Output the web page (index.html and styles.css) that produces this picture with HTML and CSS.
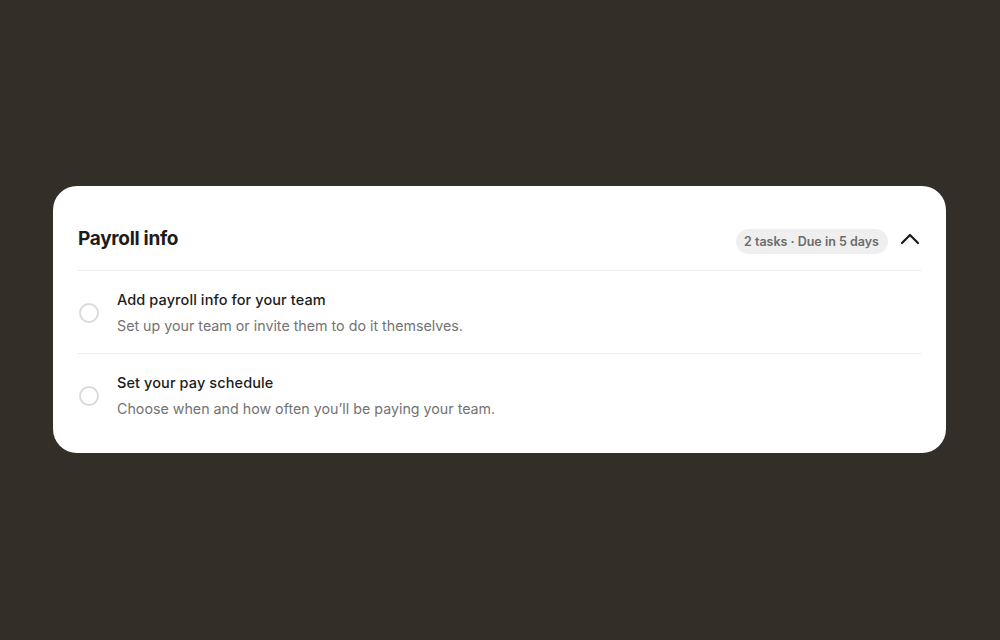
FILE: index.html
```html
<!DOCTYPE html>
<html>
<head>
<meta charset="utf-8">
<link rel="stylesheet" href="styles.css">
</head>
<body>
<div class="stage">
  <section class="card">
    <header class="card-header">
      <h2 class="card-title">Payroll info</h2>
      <div class="header-right">
        <span class="badge">2 tasks · Due in 5 days</span>
        <svg class="chevron" width="24" height="24" viewBox="0 0 24 24" fill="none" stroke="#1a1a1a" stroke-width="2.2" stroke-linecap="round" stroke-linejoin="round"><path d="M4 16 L12 8 L20 16"/></svg>
      </div>
    </header>
    <div class="task">
      <span class="check"></span>
      <div class="task-text">
        <div class="task-title">Add payroll info for your team</div>
        <div class="task-desc">Set up your team or invite them to do it themselves.</div>
      </div>
    </div>
    <div class="task">
      <span class="check"></span>
      <div class="task-text">
        <div class="task-title">Set your pay schedule</div>
        <div class="task-desc">Choose when and how often you’ll be paying your team.</div>
      </div>
    </div>
  </section>
</div>
</body>
</html>
```
FILE: styles.css
```css
* { box-sizing: border-box; }
html, body {
  margin: 0;
  padding: 0;
  background: #342e28;
  font-family: Inter, "Noto Sans", "Liberation Sans", sans-serif;
}
.stage {
  width: 1000px;
  height: 640px;
  padding: 186px 54px 0 53px;
}
.card {
  background: #ffffff;
  border-radius: 24px;
  height: 267px;
  padding: 24px 25px 17px 25px;
}
.card-header {
  display: flex;
  align-items: center;
  justify-content: space-between;
  padding: 13px 0 16px 0;
  border-bottom: 1px solid #ececec;
}
.card-title {
  margin: 0;
  font-size: 19px;
  line-height: 28px;
  font-weight: 700;
  color: #1c1c1c;
  letter-spacing: -0.3px;
}
.header-right {
  display: flex;
  align-items: center;
  gap: 10px;
}
.badge {
  margin-top: 6px;
  background: #efefef;
  color: #6b6b6b;
  font-size: 12.5px;
  font-weight: 600;
  line-height: 25px;
  height: 25px;
  padding: 0 9px 0 8px;
  border-radius: 13px;
}
.chevron {
  display: block;
  margin-right: -1px;
}
.task {
  display: flex;
  align-items: center;
  gap: 18px;
  padding: 19px 0 17px 0;
}
.task + .task {
  border-top: 1px solid #ececec;
}
.check {
  flex: none;
  width: 20px;
  height: 20px;
  margin-left: 1px;
  margin-top: -1px;
  border: 2px solid #dadada;
  border-radius: 50%;
}
.task-text {
  display: flex;
  flex-direction: column;
  gap: 6px;
}
.task-title {
  font-size: 14.5px;
  line-height: 20px;
  font-weight: 500;
  color: #1c1c1c;
  letter-spacing: 0.1px;
}
.task-desc {
  font-size: 14.25px;
  line-height: 20px;
  font-weight: 400;
  color: #737373;
}
```
